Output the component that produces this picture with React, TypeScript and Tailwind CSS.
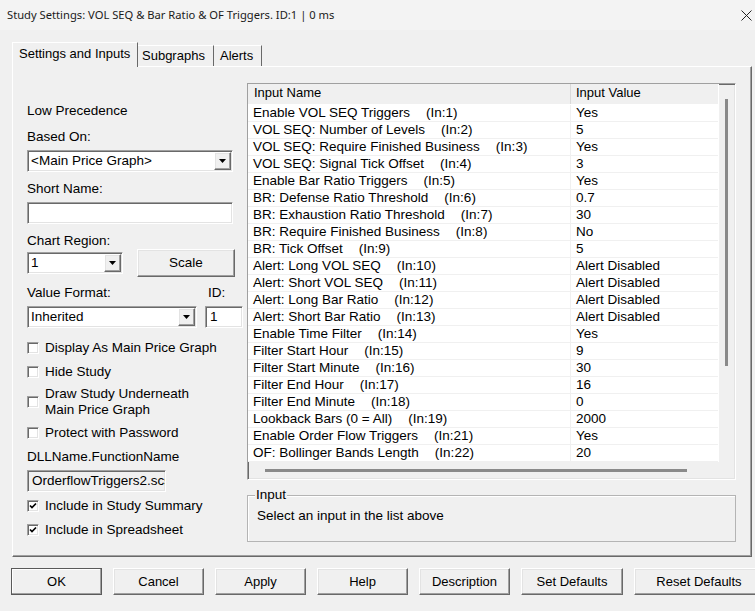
import React from 'react'

// 3D borders, classic Windows dialog look
const sunken =
  'border border-t-[#a0a0a0] border-l-[#a0a0a0] border-b-white border-r-white shadow-[inset_1px_1px_0_#696969,inset_-1px_-1px_0_#e3e3e3]'
const raised =
  'border border-t-white border-l-white border-b-[#696969] border-r-[#696969] shadow-[inset_-1px_-1px_0_#a0a0a0,inset_1px_1px_0_#e3e3e3]'

const inputs: [string, string, string][] = [
  ['Enable VOL SEQ Triggers', '1', 'Yes'],
  ['VOL SEQ: Number of Levels', '2', '5'],
  ['VOL SEQ: Require Finished Business', '3', 'Yes'],
  ['VOL SEQ: Signal Tick Offset', '4', '3'],
  ['Enable Bar Ratio Triggers', '5', 'Yes'],
  ['BR: Defense Ratio Threshold', '6', '0.7'],
  ['BR: Exhaustion Ratio Threshold', '7', '30'],
  ['BR: Require Finished Business', '8', 'No'],
  ['BR: Tick Offset', '9', '5'],
  ['Alert: Long VOL SEQ', '10', 'Alert Disabled'],
  ['Alert: Short VOL SEQ', '11', 'Alert Disabled'],
  ['Alert: Long Bar Ratio', '12', 'Alert Disabled'],
  ['Alert: Short Bar Ratio', '13', 'Alert Disabled'],
  ['Enable Time Filter', '14', 'Yes'],
  ['Filter Start Hour', '15', '9'],
  ['Filter Start Minute', '16', '30'],
  ['Filter End Hour', '17', '16'],
  ['Filter End Minute', '18', '0'],
  ['Lookback Bars (0 = All)', '19', '2000'],
  ['Enable Order Flow Triggers', '21', 'Yes'],
  ['OF: Bollinger Bands Length', '22', '20'],
]

const buttons: [string, string][] = [
  ['OK', 'w-[91px]'],
  ['Cancel', 'w-[91px]'],
  ['Apply', 'w-[91px]'],
  ['Help', 'w-[91px]'],
  ['Description', 'w-[91px]'],
  ['Set Defaults', 'w-[102px]'],
  ['Reset Defaults', 'w-[130px]'],
]

function Combo({ value, className }: { value: string; className: string }) {
  return (
    <div className={`${sunken} bg-white flex items-center h-[22px] ${className}`}>
      <span className="flex-1 pl-[3px] whitespace-nowrap overflow-hidden">{value}</span>
      <div className={`${raised} bg-[#f0f0f0] w-[17px] h-[18px] mr-px flex items-center justify-center`}>
        <svg width="7" height="4" viewBox="0 0 7 4">
          <path d="M0 0h7L3.5 4z" fill="#000" />
        </svg>
      </div>
    </div>
  )
}

function Check({ label, checked, className = '' }: { label: React.ReactNode; checked?: boolean; className?: string }) {
  return (
    <div className={`flex items-center gap-[6px] ${className}`}>
      <div className={`${sunken} w-[12px] h-[12px] bg-white flex items-center justify-center shrink-0`}>
        {checked && (
          <svg width="8" height="8" viewBox="0 0 8 8">
            <path d="M1 3.5l2 2L7 1.5" fill="none" stroke="#000" strokeWidth="1.7" />
          </svg>
        )}
      </div>
      <div className="leading-[16px]">{label}</div>
    </div>
  )
}

export default function App() {
  return (
    <div className="w-[755px] h-[611px] bg-[#f0f0f0] flex flex-col text-[13.5px] text-black overflow-hidden font-['Liberation_Sans',Arial,sans-serif]">
      {/* title bar */}
      <div className="h-[30px] flex items-center justify-between pl-[7px] pr-[2px] bg-[#f3f3f3] shrink-0">
        <span className="text-[11.2px] font-['Noto_Sans',sans-serif] text-[#1a1a1a]">
          Study Settings: VOL SEQ &amp; Bar Ratio &amp; OF Triggers. ID:1 | 0 ms
        </span>
        <svg width="11" height="11" viewBox="0 0 11 11" className="mr-[1px]">
          <path d="M0.5 0.5l10 10M10.5 0.5l-10 10" stroke="#222" strokeWidth="1" />
        </svg>
      </div>

      {/* tabs */}
      <div className="mt-[12px] ml-[12px] flex items-end h-[24px] text-[13px] relative z-10">
        <div className="h-[25px] -mb-px w-[126px] border-l border-t border-white border-r border-r-[#696969] bg-[#f0f0f0] pl-[6px] pt-[3px] leading-[16px]">
          Settings and Inputs
        </div>
        <div className="h-[21px] w-[76px] border-t border-white border-r border-r-[#696969] pl-[4px] pt-[2px] leading-[16px]">
          Subgraphs
        </div>
        <div className="h-[21px] w-[48px] border-t border-white border-r border-r-[#696969] pl-[6px] pt-[2px] leading-[16px]">
          Alerts
        </div>
      </div>

      {/* tab panel */}
      <div className="ml-[12px] w-[740px] h-[491px] border border-t-white border-l-white border-r-[#696969] border-b-[#696969] shadow-[inset_-1px_-1px_0_#a0a0a0] flex pl-[14px] gap-[4px] shrink-0">
        {/* left column */}
        <div className="w-[216px] flex flex-col leading-[16px]">
          <div className="mt-[36px]">Low Precedence</div>
          <div className="mt-[10px]">Based On:</div>
          <Combo value="<Main Price Graph>" className="mt-[5px] w-[206px]" />
          <div className="mt-[9px]">Short Name:</div>
          <div className={`${sunken} bg-white mt-[5px] h-[22px] w-[206px]`} />
          <div className="mt-[9px]">Chart Region:</div>
          <div className="flex items-center h-[28px] gap-[14px]">
            <Combo value="1" className="w-[96px]" />
            <div className={`${raised} bg-[#f0f0f0] w-[98px] h-[28px] flex items-center justify-center`}>Scale</div>
          </div>
          <div className="mt-[8px] flex">
            <span className="w-[181px]">Value Format:</span>
            <span>ID:</span>
          </div>
          <div className="mt-[5px] flex gap-[8px]">
            <Combo value="Inherited" className="w-[170px]" />
            <div className={`${sunken} bg-white h-[22px] w-[38px] pl-[4px] leading-[20px]`}>1</div>
          </div>
          <Check label="Display As Main Price Graph" className="mt-[12px]" />
          <Check label="Hide Study" className="mt-[8px]" />
          <Check
            label={
              <>
                Draw Study Underneath
                <br />
                Main Price Graph
              </>
            }
            className="mt-[6px]"
          />
          <Check label="Protect with Password" className="mt-[7px]" />
          <div className="mt-[8px]">DLLName.FunctionName</div>
          <div className={`${sunken} bg-[#f0f0f0] mt-[5px] h-[22px] w-[139px] pl-[4px] leading-[20px] whitespace-nowrap overflow-hidden`}>
            OrderflowTriggers2.scs
          </div>
          <Check label="Include in Study Summary" checked className="mt-[6px]" />
          <Check label="Include in Spreadsheet" checked className="mt-[8px]" />
        </div>

        {/* right column */}
        <div className="w-[489px] flex flex-col">
          <div className={`${sunken} mt-[16px] h-[397px] bg-[#f0f0f0] flex flex-col`}>
            <div className="flex h-[378px]">
              <div className="w-[470px] flex flex-col">
                <div className="h-[21px] flex border-b border-white text-[13px] leading-[17px] bg-[#f0f0f0]">
                  <div className="w-[323px] pl-[6px] border-r border-[#d9d9d9]">Input Name</div>
                  <div className="pl-[5px]">Input Value</div>
                </div>
                {inputs.map(([name, idx, value]) => (
                  <div key={idx} className="h-[17px] flex bg-white border-b border-[#f0f0f0] leading-[16px] whitespace-nowrap">
                    <div className="w-[323px] pl-[5px] border-r border-[#f0f0f0]">
                      {name}
                      <span className="pl-[16px]">(In:{idx})</span>
                    </div>
                    <div className="pl-[5px]">{value}</div>
                  </div>
                ))}
              </div>
              <div className="w-[15px] border-l border-white relative">
                <div className="absolute left-[6px] top-[15px] w-[3px] h-[267px] bg-[#8a8a8a]" />
              </div>
            </div>
            <div className="flex-1 relative">
              <div className="absolute left-[17px] top-[7px] w-[422px] h-[3px] bg-[#8a8a8a]" />
            </div>
          </div>

          <div className="mt-[15px] h-[47px] border border-[#b4b4b4] shadow-[inset_1px_1px_0_#fff] relative pl-[9px] pt-[12px] leading-[16px]">
            <span className="absolute -top-[9px] left-[7px] px-px bg-[#f0f0f0]">Input</span>
            Select an input in the list above
          </div>
        </div>
      </div>

      {/* bottom buttons */}
      <div className="mt-[11px] ml-[11px] flex gap-[11px] text-[13px]">
        {buttons.map(([label, w], i) => (
          <div
            key={label}
            className={`${
              i === 0
                ? 'border border-[#5a5a5a] shadow-[inset_-1px_-1px_0_#a0a0a0,inset_1px_1px_0_#fff]'
                : raised
            } ${w} h-[27px] shrink-0 bg-[#f0f0f0] flex items-center justify-center`}
          >
            {label}
          </div>
        ))}
      </div>
    </div>
  )
}
